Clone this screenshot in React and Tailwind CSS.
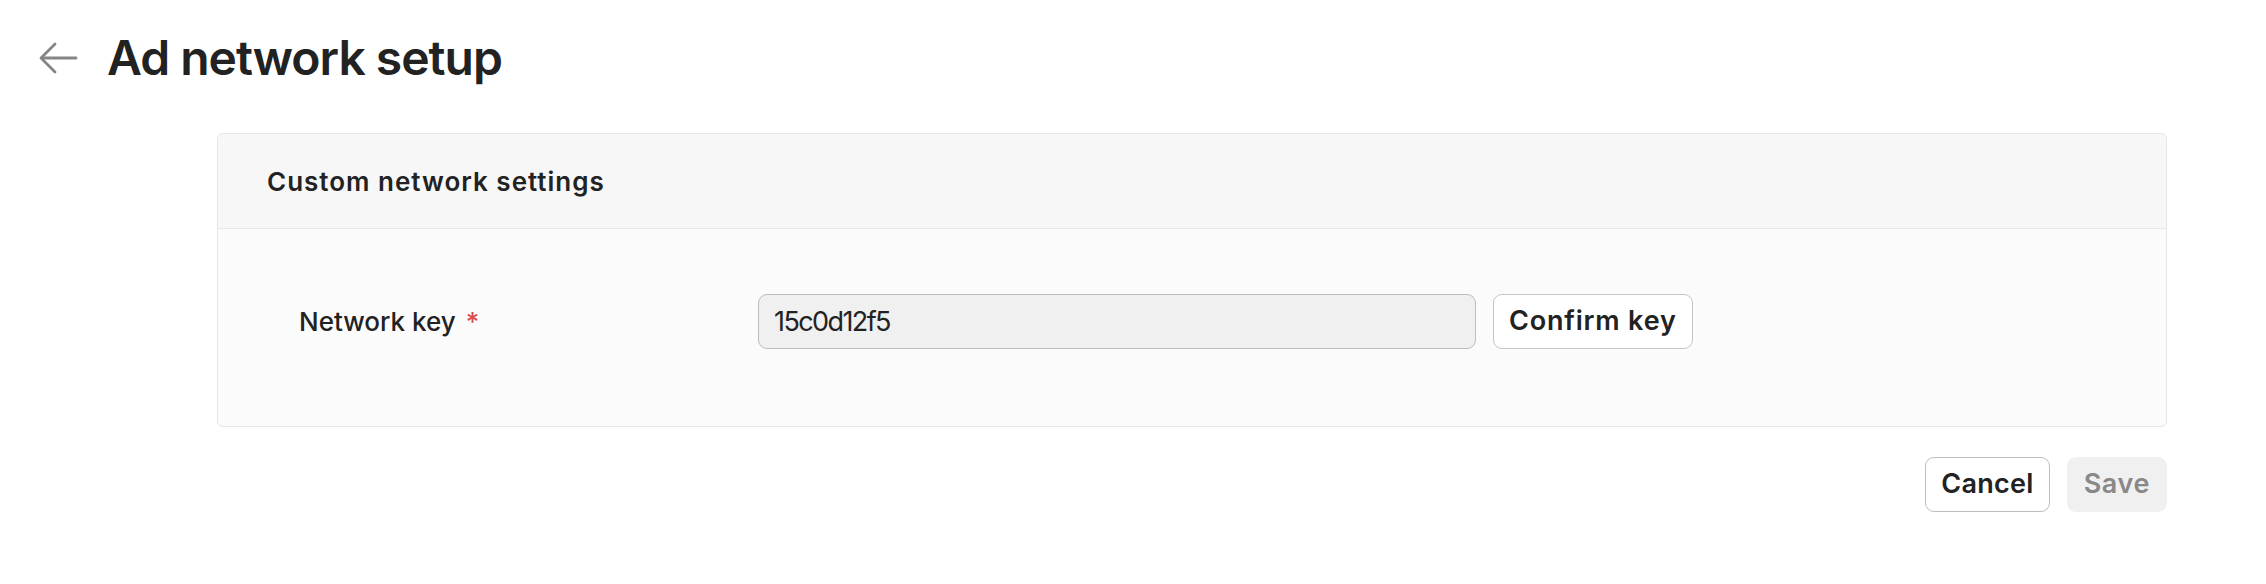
import React from 'react'

function BackArrow() {
  return (
    <svg width="40" height="32" viewBox="0 0 40 32" fill="none" className="shrink-0">
      <path d="M38 16H4" stroke="#858585" strokeWidth="2.8" strokeLinecap="round" />
      <path d="M17 2L3 16l14 14" stroke="#858585" strokeWidth="2.8" strokeLinecap="round" strokeLinejoin="round" />
    </svg>
  )
}

export default function App() {
  return (
    <div className="min-h-screen bg-white text-[#222222]" style={{ fontFamily: 'Inter, "Noto Sans", sans-serif' }}>
      <div className="flex items-center gap-[29px] pl-[38px] pt-[29px]">
        <BackArrow />
        <h1 className="text-[48px] font-semibold leading-[58px] tracking-[-1px]">Ad network setup</h1>
      </div>

      <div className="ml-[217px] mr-[99px] mt-[46px]">
        <div className="rounded-[6px] border-[1.5px] border-[#e6e6e6] bg-[#fbfbfb] overflow-hidden">
          <div className="h-[95px] flex items-center px-[49px] bg-[#f7f7f7] border-b-[1.5px] border-[#e6e6e6]">
            <h2 className="text-[26px] font-semibold tracking-[1px]">Custom network settings</h2>
          </div>
          <div className="flex items-center pt-[65px] pb-[77px]">
            <label className="w-[540px] pl-[81px] text-[26px] font-medium flex items-center gap-[10px]">
              Network key <span className="text-[#dd4c4c]">*</span>
            </label>
            <input
              readOnly
              value="15c0d12f5"
              className="w-[718px] h-[55px] rounded-[9px] border-[1.5px] border-[#bdbdbd] bg-[#f0f0f0] px-[15px] text-[27px] tracking-[-1.6px] text-[#222222] outline-none"
            />
            <button className="ml-[17px] h-[55px] px-[15px] rounded-[9px] border-[1.5px] border-[#c6c6c6] bg-white text-[27px] font-semibold tracking-[0.8px]">
              Confirm key
            </button>
          </div>
        </div>

        <div className="flex justify-end gap-[17px] mt-[30px]">
          <button className="h-[55px] px-[15px] rounded-[9px] border-[1.5px] border-[#bdbdbd] bg-white text-[27px] font-semibold tracking-[0.3px]">
            Cancel
          </button>
          <button className="h-[55px] px-[17px] rounded-[9px] bg-[#f0f0f0] text-[27px] font-semibold tracking-[0.6px] text-[#888888]">
            Save
          </button>
        </div>
      </div>
    </div>
  )
}
